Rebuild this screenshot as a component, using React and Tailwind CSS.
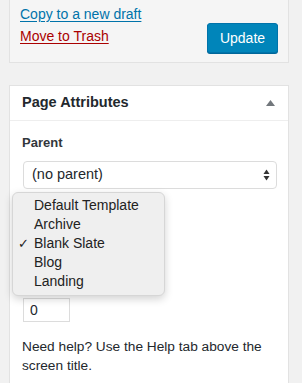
const TEMPLATES = [
  { label: "Default Template" },
  { label: "Archive" },
  { label: "Blank Slate", checked: true },
  { label: "Blog" },
  { label: "Landing" },
];

export default function App() {
  return (
    <div
      className="w-[302px] h-[383px] overflow-hidden bg-[#f1f1f1] text-[#23282d]"
      style={{ fontFamily: '"Liberation Sans", Arial, sans-serif' }}
    >
      {/* Publish box footer */}
      <div className="ml-[9px] w-[280px] h-[63px] flex justify-between px-[10px] bg-[#f5f5f5] border-x border-b border-[#e2e2e2]">
        <div className="flex flex-col pt-[5px] gap-[3px] text-[14px] leading-[19px]">
          <a href="#" className="text-[#0073aa] underline underline-offset-[2px]">Copy to a new draft</a>
          <a href="#" className="text-[#a00] underline underline-offset-[2px]">Move to Trash</a>
        </div>
        <button className="mt-[23px] w-[71px] h-[30px] rounded-[3px] bg-[#0085ba] border border-[#0073aa] shadow-[0_1px_0_#006799] text-white text-[14px] leading-none">
          Update
        </button>
      </div>

      {/* Page Attributes */}
      <div className="ml-[9px] mt-[22px] w-[280px] bg-white border border-[#e2e2e2]">
        <div className="h-[35px] flex items-center justify-between pl-[12px] pr-[13px] border-b border-[#eeeeee]">
          <h2 className="text-[14.5px] font-bold">Page Attributes</h2>
          <svg width="9" height="6" viewBox="0 0 9 6">
            <path d="M4.5 0 L9 6 L0 6 Z" fill="#72777c" />
          </svg>
        </div>

        <div className="px-[12px] pt-[13px] pb-[20px]">
          <p className="text-[13px] leading-[18px] font-bold text-[#32373c]">Parent</p>
          <div className="relative mt-[9px] ml-[1px] w-[254px]">
            <div className="h-[28px] flex items-center justify-between pl-[8px] pr-[6px] rounded-[4px] border border-[#dcdcdc] bg-white text-[14.5px]">
              <span>(no parent)</span>
              <svg width="7" height="12" viewBox="0 0 7 12">
                <path d="M3.5 0.5 L6.5 5 L0.5 5 Z" fill="#333" />
                <path d="M3.5 11.5 L6.5 7 L0.5 7 Z" fill="#333" />
              </svg>
            </div>

            {/* open template menu */}
            <div className="h-[109px]" />
            <div className="absolute left-[-11px] top-[31px] w-[153px] h-[104px] rounded-[6px] bg-[#efefef] border border-[#d6d6d6] shadow-[0_3px_8px_rgba(0,0,0,0.18)] pt-[3px] text-[14px] leading-[19px] text-[#222]">
              {TEMPLATES.map((t) => (
                <div key={t.label} className="flex items-center">
                  <span className="w-[21px] pl-[5px] text-[13px]">{t.checked ? "✓" : ""}</span>
                  <span>{t.label}</span>
                </div>
              ))}
            </div>
          </div>

          <input
            defaultValue="0"
            className="ml-[1px] w-[47px] h-[24px] px-[6px] border border-[#dcdcdc] text-[14px] outline-none"
          />

          <p className="mt-[15px] text-[13.7px] leading-[19px]">
            Need help? Use the Help tab above the screen title.
          </p>
        </div>
      </div>
    </div>
  );
}
